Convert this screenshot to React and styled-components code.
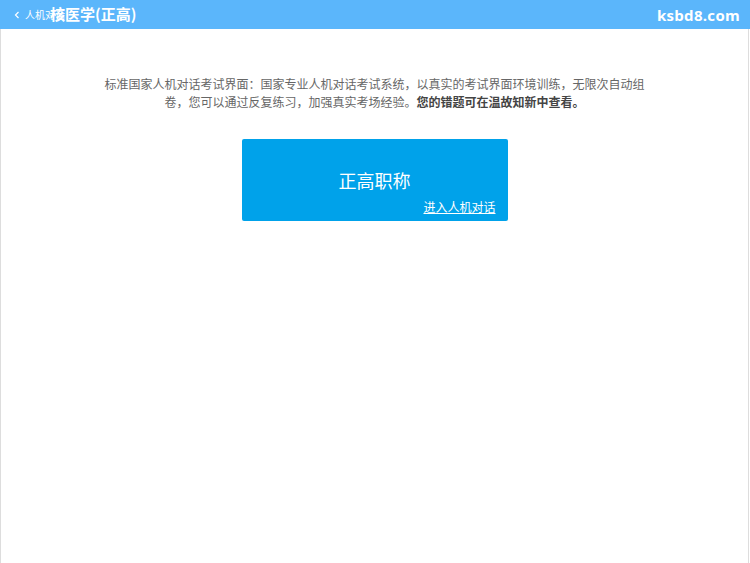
import React from "react"
import styled, { createGlobalStyle } from "styled-components"

const GlobalStyle = createGlobalStyle`
  html, body {
    margin: 0;
    padding: 0;
    background: #ffffff;
    font-family: "Microsoft YaHei", "Noto Sans CJK SC", "Liberation Sans", sans-serif;
  }
`

const Page = styled.div`
  width: 750px;
  height: 563px;
  display: flex;
  flex-direction: column;
  overflow: hidden;
`

const Header = styled.header`
  position: relative;
  height: 29px;
  flex-shrink: 0;
  background: #5bb6fb;
  display: flex;
  align-items: center;
  justify-content: space-between;
  padding: 0 10px 0 13px;
  color: #ffffff;
`

const BackLink = styled.a`
  display: flex;
  align-items: center;
  gap: 4px;
  font-size: 10px;
  color: #ffffff;
  text-decoration: none;
`

const Title = styled.h1`
  position: absolute;
  left: 50px;
  top: 0;
  margin: 0;
  line-height: 27px;
  font-size: 15px;
  font-weight: bold;
  color: #ffffff;
`

const Logo = styled.div`
  font-family: "Open Sans", "Liberation Sans", sans-serif;
  font-size: 15px;
  font-weight: bold;
  letter-spacing: 0.3px;
`

const Content = styled.main`
  flex: 1;
  border-left: 1px solid #dddddd;
  border-right: 1px solid #dddddd;
  margin-right: 1px;
  display: flex;
  flex-direction: column;
  align-items: center;
  padding-top: 46px;
`

const Intro = styled.p`
  width: 540px;
  margin: 0;
  font-size: 12px;
  line-height: 18px;
  color: #666666;
  text-align: center;

  strong {
    color: #444444;
  }
`

const ModeCard = styled.a`
  margin-top: 28px;
  width: 266px;
  height: 82px;
  box-sizing: border-box;
  background: #00a2ea;
  border-radius: 2px;
  display: flex;
  flex-direction: column;
  align-items: center;
  justify-content: center;
  position: relative;
  color: #ffffff;
  text-decoration: none;
`

const CardTitle = styled.div`
  font-size: 18px;
  margin-top: 0;
`

const CardLink = styled.span`
  position: absolute;
  right: 12px;
  bottom: 6px;
  font-size: 12px;
  text-decoration: underline;
`

export default function App() {
  return (
    <>
      <GlobalStyle />
      <Page>
        <Header>
          <BackLink href="#">
            <svg width="8" height="8" viewBox="0 0 8 8">
              <path d="M5.5 1 L2.5 4 L5.5 7" fill="none" stroke="#fff" strokeWidth="1.2" />
            </svg>
            人机对话
          </BackLink>
          <Title>核医学(正高)</Title>
          <Logo>ksbd8.com</Logo>
        </Header>
        <Content>
          <Intro>
            标准国家人机对话考试界面：国家专业人机对话考试系统，以真实的考试界面环境训练，无限次自动组卷，您可以通过反复练习，加强真实考场经验。
            <strong>您的错题可在温故知新中查看。</strong>
          </Intro>
          <ModeCard href="#">
            <CardTitle>正高职称</CardTitle>
            <CardLink>进入人机对话</CardLink>
          </ModeCard>
        </Content>
      </Page>
    </>
  )
}
